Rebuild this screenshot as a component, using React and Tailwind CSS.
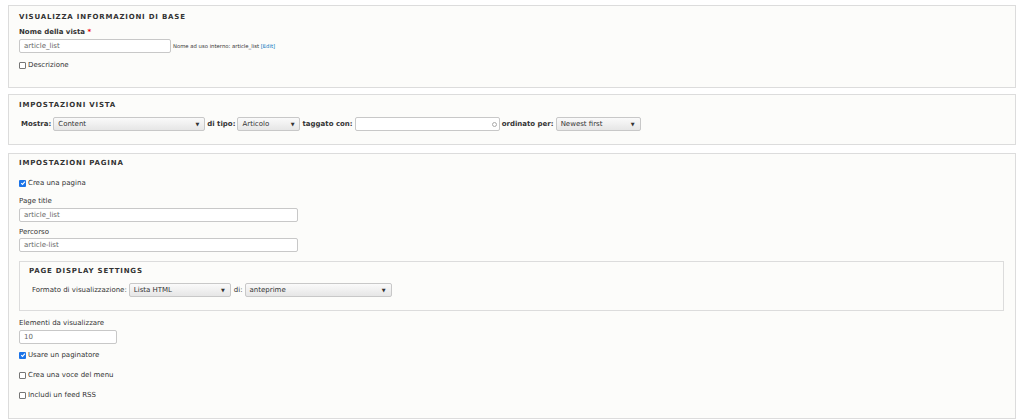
import React from 'react'

const Select = ({ value, width }) => (
  <div
    className="h-[14px] flex items-center justify-between pl-[4px] pr-[5px] border border-[#c8c8c8] rounded-[2px] bg-gradient-to-b from-[#fafafa] to-[#e6e6e6] text-[#333]"
    style={{ width }}
  >
    <span>{value}</span>
    <span className="text-[5px] text-[#333]">▼</span>
  </div>
)

const TextInput = ({ value, width }) => (
  <div
    className="h-[14px] flex items-center px-[4px] border border-[#c8c8c8] rounded-[2px] bg-white text-[#666]"
    style={{ width }}
  >
    {value}
  </div>
)

const Check = ({ checked, label, className = '' }) => (
  <label className={`flex items-center h-[10px] ${className}`}>
    {checked ? (
      <span className="w-[7px] h-[7px] rounded-[1px] bg-[#1a73e8] flex items-center justify-center mr-[2px]">
        <svg width="6" height="6" viewBox="0 0 10 10">
          <path d="M2 5.2 L4.2 7.4 L8.2 2.6" stroke="white" strokeWidth="1.8" fill="none" />
        </svg>
      </span>
    ) : (
      <span className="w-[7px] h-[7px] rounded-[1px] border border-[#767676] bg-white mr-[2px]" />
    )}
    <span>{label}</span>
  </label>
)

const Heading = ({ children, className = '' }) => (
  <div className={`h-[10px] leading-[10px] font-bold uppercase tracking-[0.8px] text-[#333] ${className}`}>
    {children}
  </div>
)

export default function App() {
  return (
    <div className="w-[1024px] h-[420px] bg-white font-['DejaVu_Sans',sans-serif] text-[7px] leading-[10px] text-[#333] pt-[5px] px-[8px]">
      {/* base info */}
      <div className="border border-[#dcdcdc] bg-[#fcfcfa] pt-[6px] pb-[17px] px-[10px]">
        <Heading>Visualizza informazioni di base</Heading>
        <div className="mt-[5px] font-bold">
          Nome della vista <span className="text-[#e00]">*</span>
        </div>
        <div className="mt-[2px] flex items-center gap-[2px]">
          <TextInput value="article_list" width={152} />
          <span className="text-[5.3px]">
            Nome ad uso interno: article_list <span className="text-[#0074bd]">[Edit]</span>
          </span>
        </div>
        <Check label="Descrizione" className="mt-[7px]" />
      </div>

      {/* view settings */}
      <div className="mt-[6px] border border-[#dcdcdc] bg-[#fcfcfa] pt-[5px] pb-[13px] px-[10px]">
        <Heading>Impostazioni vista</Heading>
        <div className="mt-[7px] ml-[2px] flex items-center gap-[2px] font-bold">
          <span>Mostra:</span>
          <div className="font-normal"><Select value="Content" width={152} /></div>
          <span>di tipo:</span>
          <div className="font-normal"><Select value="Articolo" width={63} /></div>
          <span>taggato con:</span>
          <div className="h-[14px] w-[145px] border border-[#c8c8c8] rounded-[2px] bg-white flex items-center justify-end pr-[2px]">
            <span className="w-[5px] h-[5px] rounded-full border border-[#aaa]" />
          </div>
          <span>ordinato per:</span>
          <div className="font-normal"><Select value="Newest first" width={85} /></div>
        </div>
      </div>

      {/* page settings */}
      <div className="mt-[8px] border border-[#dcdcdc] bg-[#fcfcfa] pt-[4px] pb-[18px] px-[10px]">
        <Heading>Impostazioni pagina</Heading>
        <Check checked label="Crea una pagina" className="mt-[10px]" />
        <div className="mt-[8px]">Page title</div>
        <div className="mt-[2px]"><TextInput value="article_list" width={279} /></div>
        <div className="mt-[5px]">Percorso</div>
        <div className="mt-[1px]"><TextInput value="article-list" width={279} /></div>

        <div className="mt-[9px] border border-[#dcdcdc] bg-[#fcfcfa] pt-[4px] pb-[13px] px-[9px] mr-[1px]">
          <Heading>Page display settings</Heading>
          <div className="mt-[7px] ml-[3px] flex items-center gap-[2px]">
            <span>Formato di visualizzazione:</span>
            <Select value="Lista HTML" width={102} />
            <span className="ml-[1px]">di:</span>
            <Select value="anteprime" width={147} />
          </div>
        </div>

        <div className="mt-[7px]">Elementi da visualizzare</div>
        <div className="mt-[2px]"><TextInput value="10" width={98} /></div>
        <Check checked label="Usare un paginatore" className="mt-[6px]" />
        <Check label="Crea una voce del menu" className="mt-[10px]" />
        <Check label="Includi un feed RSS" className="mt-[10px]" />
      </div>
    </div>
  )
}
